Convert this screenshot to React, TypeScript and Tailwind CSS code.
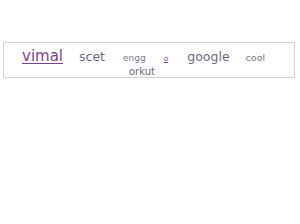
import React from "react";

export default function App() {
  const font = { fontFamily: '"DejaVu Sans", Verdana, sans-serif' };
  return (
    <div className="w-[300px] h-[224px] bg-white pt-[42px]" style={font}>
      <div className="ml-[3px] w-[292px] h-[36px] border border-[#d4d4d4]">
        <div className="flex items-baseline pl-[18px] mt-[6px] leading-none">
          <a className="text-[15px] text-[#7b3f8f] underline underline-offset-[2px]">vimal</a>
          <span className="text-[12.5px] text-[#6a6a80] ml-[16px]">scet</span>
          <span className="text-[9px] text-[#7a7a8c] ml-[18px]">engg</span>
          <a className="text-[7.5px] text-[#7b3f8f] underline ml-[18px]">o</a>
          <span className="text-[12.5px] text-[#6a6a80] ml-[19px]">google</span>
          <span className="text-[9.5px] text-[#7a7a8c] ml-[16px]">cool</span>
        </div>
        <div className="flex items-baseline pl-[125px] mt-[3px] leading-none">
          <span className="text-[10px] text-[#6a6a80]">orkut</span>
        </div>
      </div>
    </div>
  );
}
